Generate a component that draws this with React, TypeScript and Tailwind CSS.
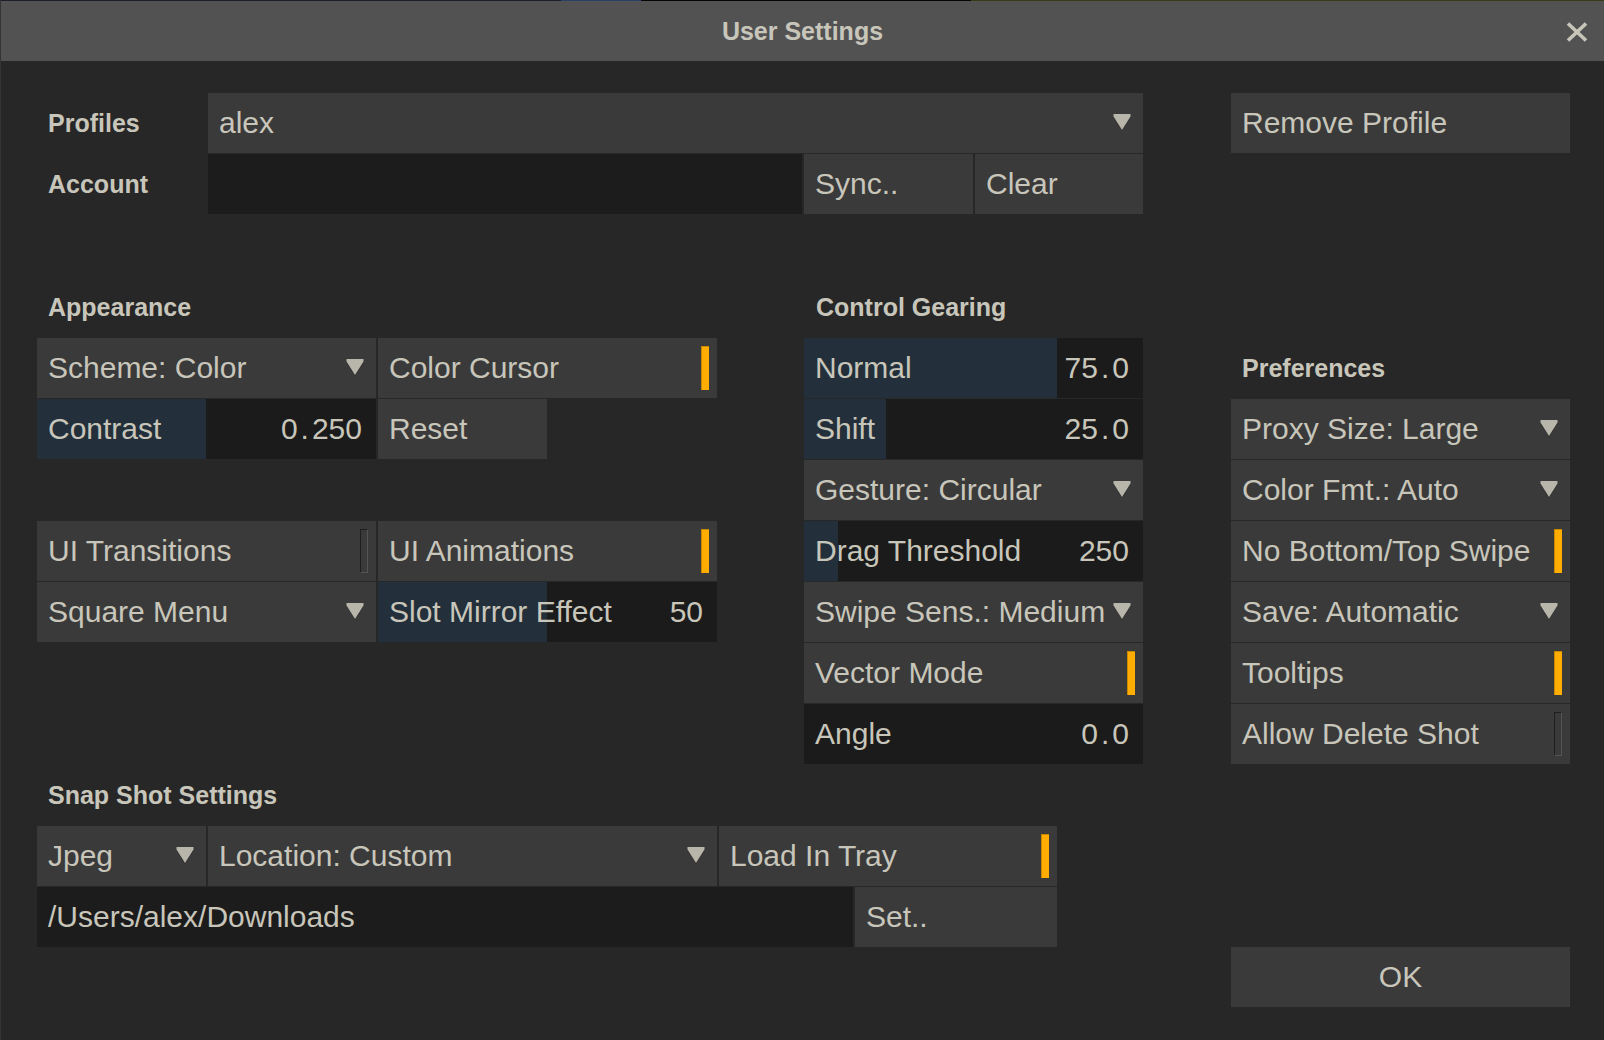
import React from "react";

const FONT = { fontFamily: '"Liberation Sans", Arial, sans-serif' };

function Arrow() {
  return (
    <svg width="18" height="17" viewBox="0 0 18 17" className="shrink-0">
      <polygon points="0.5,1 17.5,1 17.5,3.5 9,17 0.5,3.5" fill="#2c2c2c" />
      <polygon points="0.5,0 17.5,0 17.5,2.5 9,16 0.5,2.5" fill="#b8b6aa" />
    </svg>
  );
}

function Cell({
  w,
  children,
  center = false,
}: {
  w: string;
  children?: React.ReactNode;
  center?: boolean;
}) {
  return (
    <div
      className={`h-[60px] ${w} shrink-0 bg-[#3a3a3a] flex items-center ${
        center ? "justify-center" : "pl-[11px]"
      } pb-[1px] text-[30px] text-[#c8c6ba] whitespace-nowrap`}
    >
      {children}
    </div>
  );
}

function Dropdown({ w, label }: { w: string; label: string }) {
  return (
    <Cell w={w}>
      <span className="flex-1 overflow-hidden">{label}</span>
      <span className="mr-[12px] ml-[2px] flex items-center">
        <Arrow />
      </span>
    </Cell>
  );
}

function Toggle({ w, label, on }: { w: string; label: string; on: boolean }) {
  return (
    <Cell w={w}>
      <span className="flex-1">{label}</span>
      {on ? (
        <span className="mr-[8px] mt-[1px] w-[8px] h-[44px] bg-[#ffad00] border-t border-l border-[#c88800]" />
      ) : (
        <span className="mr-[8px] mt-[1px] w-[8px] h-[44px] border border-t-[#1e1e1e] border-l-[#1e1e1e] border-b-[#545454] border-r-[#545454]" />
      )}
    </Cell>
  );
}

function Value({ v }: { v: string }) {
  const parts = v.split(".");
  if (parts.length === 1) return <span>{v}</span>;
  return (
    <span>
      {parts[0]}
      <span className="mx-[3px]">.</span>
      {parts[1]}
    </span>
  );
}

function Slider({
  w,
  label,
  value,
  fill,
}: {
  w: string;
  label: string;
  value: string;
  fill: number;
}) {
  return (
    <div
      className={`relative h-[60px] ${w} shrink-0 bg-[#1b1b1b] flex items-center pl-[11px] pr-[14px] pb-[1px] text-[30px] text-[#c8c6ba] whitespace-nowrap`}
    >
      <div
        className="absolute left-0 top-0 bottom-0 bg-[#23303b]"
        style={{ width: fill }}
      />
      <span className="relative flex-1">{label}</span>
      <span className="relative">
        <Value v={value} />
      </span>
    </div>
  );
}

function Button({ w, label, center }: { w: string; label: string; center?: boolean }) {
  return (
    <Cell w={w} center={center}>
      {label}
    </Cell>
  );
}

function Heading({ children }: { children: React.ReactNode }) {
  return (
    <span className="text-[25px] font-bold text-[#c8c6ba] whitespace-nowrap">
      {children}
    </span>
  );
}

export default function App() {
  return (
    <div
      className="w-[1604px] h-[1040px] bg-[#272727] flex flex-col overflow-hidden border-l border-[#343434]"
      style={FONT}
    >
      {/* top 1px line */}
      <div className="h-[1px] flex">
        <div className="w-[560px] bg-[#1b1f2c]" />
        <div className="w-[80px] bg-[#28406a]" />
        <div className="w-[330px] bg-[#050505]" />
        <div className="flex-1 bg-[#3a3a14]" />
      </div>
      {/* title bar */}
      <div className="relative h-[60px] bg-[#525252] flex items-center justify-center">
        <span className="text-[25px] font-bold text-[#c8c6ba] mt-[1px]">User Settings</span>
        <svg
          width="22"
          height="20"
          viewBox="0 0 22 20"
          className="absolute right-[16px] top-[21px]"
        >
          <line x1="2" y1="1.5" x2="20" y2="18.5" stroke="#c8c6ba" strokeWidth="3.6" />
          <line x1="20" y1="1.5" x2="2" y2="18.5" stroke="#c8c6ba" strokeWidth="3.6" />
        </svg>
      </div>

      {/* body */}
      <div className="flex pl-[36px] pt-[32px]">
        {/* left column */}
        <div className="flex flex-col w-[1106px]">
          <div className="flex h-[60px]">
            <div className="w-[171px] pl-[11px] pt-[1px] flex items-center">
              <Heading>Profiles</Heading>
            </div>
            <Dropdown w="w-[935px]" label="alex" />
          </div>
          <div className="flex h-[60px] mt-[1px]">
            <div className="w-[171px] pl-[11px] pt-[1px] flex items-center">
              <Heading>Account</Heading>
            </div>
            <div className="w-[594px] h-[60px] bg-[#1c1c1c]" />
            <div className="ml-[2px]">
              <Button w="w-[169px]" label="Sync.." />
            </div>
            <div className="ml-[2px]">
              <Button w="w-[168px]" label="Clear" />
            </div>
          </div>

          {/* section labels */}
          <div className="flex h-[60px] mt-[63px] pt-[1px] items-center">
            <div className="w-[767px] pl-[11px]">
              <Heading>Appearance</Heading>
            </div>
            <div className="pl-[12px]">
              <Heading>Control Gearing</Heading>
            </div>
          </div>

          {/* middle section */}
          <div className="flex mt-[1px]">
            <div className="w-[680px] flex flex-col gap-[1px]">
              <div className="flex gap-[2px]">
                <Dropdown w="w-[339px]" label="Scheme: Color" />
                <Toggle w="w-[339px]" label="Color Cursor" on />
              </div>
              <div className="flex gap-[2px]">
                <Slider w="w-[339px]" label="Contrast" value="0.250" fill={169} />
                <Button w="w-[169px]" label="Reset" />
              </div>
              <div className="h-[60px]" />
              <div className="flex gap-[2px]">
                <Toggle w="w-[339px]" label="UI Transitions" on={false} />
                <Toggle w="w-[339px]" label="UI Animations" on />
              </div>
              <div className="flex gap-[2px]">
                <Dropdown w="w-[339px]" label="Square Menu" />
                <Slider w="w-[339px]" label="Slot Mirror Effect" value="50" fill={169} />
              </div>
            </div>
            <div className="ml-[87px] w-[339px] flex flex-col gap-[1px]">
              <Slider w="w-[339px]" label="Normal" value="75.0" fill={253} />
              <Slider w="w-[339px]" label="Shift" value="25.0" fill={82} />
              <Dropdown w="w-[339px]" label="Gesture: Circular" />
              <Slider w="w-[339px]" label="Drag Threshold" value="250" fill={34} />
              <Dropdown w="w-[339px]" label="Swipe Sens.: Medium" />
              <Toggle w="w-[339px]" label="Vector Mode" on />
              <Slider w="w-[339px]" label="Angle" value="0.0" fill={0} />
            </div>
          </div>

          {/* snap shot */}
          <div className="h-[60px] mt-[1px] pl-[11px] pt-[1px] flex items-center">
            <Heading>Snap Shot Settings</Heading>
          </div>
          <div className="flex gap-[2px] mt-[1px]">
            <Dropdown w="w-[169px]" label="Jpeg" />
            <Dropdown w="w-[509px]" label="Location: Custom" />
            <Toggle w="w-[338px]" label="Load In Tray" on />
          </div>
          <div className="flex gap-[2px] mt-[1px]">
            <div className="w-[816px] h-[60px] bg-[#1c1c1c] flex items-center pl-[11px] pb-[1px] text-[30px] text-[#c8c6ba]">
              /Users/alex/Downloads
            </div>
            <Button w="w-[202px]" label="Set.." />
          </div>
        </div>

        {/* right column */}
        <div className="ml-[88px] w-[339px] flex flex-col">
          <Button w="w-[339px]" label="Remove Profile" />
          <div className="h-[60px] mt-[185px] pl-[11px] pt-[1px] flex items-center">
            <Heading>Preferences</Heading>
          </div>
          <div className="flex flex-col gap-[1px] mt-[1px]">
            <Dropdown w="w-[339px]" label="Proxy Size: Large" />
            <Dropdown w="w-[339px]" label="Color Fmt.: Auto" />
            <Toggle w="w-[339px]" label="No Bottom/Top Swipe" on />
            <Dropdown w="w-[339px]" label="Save: Automatic" />
            <Toggle w="w-[339px]" label="Tooltips" on />
            <Toggle w="w-[339px]" label="Allow Delete Shot" on={false} />
          </div>
          <div className="mt-[183px]">
            <Button w="w-[339px]" label="OK" center />
          </div>
        </div>
      </div>
    </div>
  );
}
